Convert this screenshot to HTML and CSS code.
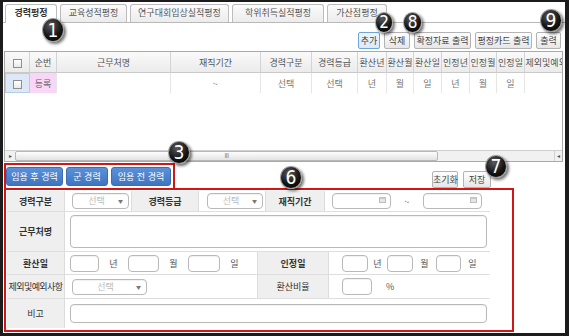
FILE: index.html
```html
<!DOCTYPE html>
<html lang="ko">
<head>
  <meta charset="UTF-8">
  <title>경력평정</title>
  <link rel="stylesheet" href="styles.css">
</head>
<body>
<div class="frame">
  <div class="tabs">
    <div class="tab active t1">경력평정</div>
    <div class="tab t2">교육성적평정</div>
    <div class="tab t3">연구대회입상실적평정</div>
    <div class="tab t4">학위취득실적평정</div>
    <div class="tab t5">가산점평정</div>
  </div>

  <div class="toolbar">
    <button class="btn focus w-add">추가</button>
    <button class="btn w-del">삭제</button>
    <button class="btn w-long">확정자료 출력</button>
    <button class="btn w-long">평정카드 출력</button>
    <button class="btn w-out">출력</button>
  </div>

  <div class="grid">
    <div class="grid-body">
      <table class="list">
        <colgroup>
          <col class="c25"><col class="c27"><col class="c114"><col class="c90">
          <col class="c51"><col class="c46"><col class="c29"><col class="c27">
          <col class="c28"><col class="c28"><col class="c27"><col class="c28"><col class="c60">
        </colgroup>
        <thead>
          <tr>
            <th><span class="chk"></span></th>
            <th>순번</th>
            <th>근무처명</th>
            <th>재직기간</th>
            <th>경력구분</th>
            <th>경력등급</th>
            <th>환산년</th>
            <th>환산월</th>
            <th>환산일</th>
            <th>인정년</th>
            <th>인정월</th>
            <th>인정일</th>
            <th>제외및예외사항</th>
          </tr>
        </thead>
        <tbody>
          <tr>
            <td class="sel"><span class="chk"></span></td>
            <td class="reg">등록</td>
            <td></td>
            <td>~</td>
            <td>선택</td>
            <td>선택</td>
            <td>년</td>
            <td>월</td>
            <td>일</td>
            <td>년</td>
            <td>월</td>
            <td>일</td>
            <td></td>
          </tr>
        </tbody>
      </table>
    </div>
    <div class="hscroll">
      <span class="sbtn">&#9656;</span>
      <div class="track"><div class="thumb">III</div></div>
      <span class="sbtn">&#9666;</span>
    </div>
  </div>

  <div class="actions">
    <div class="mark-box">
      <button class="bbtn w-after">임용 후 경력</button>
      <button class="bbtn w-army">군 경력</button>
      <button class="bbtn w-before">임용 전 경력</button>
    </div>
    <div class="right-btns">
      <button class="btn w-reset">초기화</button>
      <button class="btn w-save">저장</button>
    </div>
  </div>

  <div class="form">
    <div class="ftable">
      <div class="frow r1">
        <div class="lab b">경력구분</div>
        <div class="val p7"><span class="select s57">선택<i>&#9660;</i></span></div>
        <div class="lab b sep">경력등급</div>
        <div class="val p8"><span class="select s56">선택<i>&#9660;</i></span></div>
        <div class="lab b sep">재직기간</div>
        <div class="val p7">
          <span class="date"><svg width="7" height="7" viewBox="0 0 7 7"><rect x="0.5" y="1.5" width="6" height="5" fill="#e6e6e6" stroke="#bdbdbd"/><rect x="0.5" y="1.5" width="6" height="1.5" fill="#c9c9c9"/></svg></span>
          <span class="tilde">~</span>
          <span class="date"><svg width="7" height="7" viewBox="0 0 7 7"><rect x="0.5" y="1.5" width="6" height="5" fill="#e6e6e6" stroke="#bdbdbd"/><rect x="0.5" y="1.5" width="6" height="1.5" fill="#c9c9c9"/></svg></span>
        </div>
      </div>
      <div class="frow r2">
        <div class="lab b">근무처명</div>
        <div class="val p5"><span class="field area"></span></div>
      </div>
      <div class="frow r3">
        <div class="lab b">환산일</div>
        <div class="val p5">
          <span class="field n29"></span><span class="unit u29">년</span>
          <span class="field n31"></span><span class="unit u29">월</span>
          <span class="field n32"></span><span class="unit u29">일</span>
        </div>
        <div class="lab b sep">인정일</div>
        <div class="val p13">
          <span class="field n26"></span><span class="unit u19">년</span>
          <span class="field n26"></span><span class="unit u23">월</span>
          <span class="field n25"></span><span class="unit u23">일</span>
        </div>
      </div>
      <div class="frow r4">
        <div class="lab narrow">제외및예외사항</div>
        <div class="val p7"><span class="select s75">선택<i>&#9660;</i></span></div>
        <div class="lab sep">환산비율</div>
        <div class="val p13">
          <span class="field n30"></span><span class="pct">%</span>
        </div>
      </div>
      <div class="frow r5">
        <div class="lab">비고</div>
        <div class="val p5"><span class="field line"></span></div>
      </div>
    </div>
  </div>

  <span class="badge b1">1</span>
  <span class="badge b2">2</span>
  <span class="badge b8">8</span>
  <span class="badge b9">9</span>
  <span class="badge b3">3</span>
  <span class="badge b6">6</span>
  <span class="badge b7">7</span>
</div>
</body>
</html>
```

FILE: styles.css
```css
body { margin: 0; background: #fff; font-family: "Noto Sans CJK KR", "Noto Sans", sans-serif; font-size: 9px; color: #333; }
* { box-sizing: border-box; }

.frame {
  position: relative;
  width: 569px;
  height: 336px;
  border: 3px solid #1c1c1c;
  border-top-width: 2px;
  border-right-width: 4px;
  overflow: hidden;
  background: #fff;
}

/* tabs */
.tabs { display: flex; gap: 3px; height: 21px; padding: 2px 0 0 2px; border-bottom: 1px solid #b9b9b9; }
.tab {
  height: 18px;
  border: 1px solid #bcbcbc;
  border-bottom: none;
  border-radius: 3px 3px 0 0;
  background: linear-gradient(#fbfbfb, #ececec);
  color: #555;
  text-align: center;
  line-height: 16px;
  white-space: nowrap;
}
.tab.active { background: #fff; height: 19px; margin-bottom: -1px; color: #333; font-weight: bold; }
.t1 { width: 52px; }
.t2 { width: 67px; }
.t3 { width: 99px; }
.t4 { width: 92px; }
.t5 { width: 60px; }

/* buttons */
.btn {
  height: 17px;
  padding: 0;
  border: 1px solid #b3b3b3;
  border-radius: 2px;
  background: linear-gradient(#ffffff, #e6e6e6);
  color: #444;
  font: inherit;
  white-space: nowrap;
}
.btn.focus { border-color: #6ea5dc; background: linear-gradient(#eef6fd, #d9eafa); }
.toolbar { display: flex; justify-content: flex-end; gap: 4px; margin-top: 9px; padding-right: 4px; }
.w-add { width: 22px; }
.w-del { width: 26px; }
.w-long { width: 57px; }
.w-out { width: 25px; }

/* list grid */
.grid {
  display: flex;
  flex-direction: column;
  height: 111px;
  margin: 2px 2px 0 1px;
  border: 1px solid #a9a9a9;
}
.grid-body { flex: 1; overflow: hidden; }
.list { width: 580px; table-layout: fixed; border-collapse: separate; border-spacing: 0; }
.list th {
  height: 21px;
  padding: 0;
  background: linear-gradient(#fafafa, #ebebeb);
  border-right: 1px solid #d3d3d3;
  border-bottom: 1px solid #c9c9c9;
  font-weight: normal;
  color: #555;
  white-space: nowrap;
  overflow: hidden;
}
.list td {
  height: 20px;
  padding: 0;
  text-align: center;
  border-right: 1px solid #e6e6e6;
  color: #777;
  white-space: nowrap;
}
.list td.sel { background: #dce8f5; border: 1px solid #b3cde9; }
.list td.reg { background: #f9d6f7; color: #666; }
.c25 { width: 25px; }
.c27 { width: 27px; }
.c114 { width: 114px; }
.c90 { width: 90px; }
.c51 { width: 51px; }
.c46 { width: 46px; }
.c29 { width: 29px; }
.c28 { width: 28px; }
.c60 { width: 60px; }
.chk {
  display: inline-block;
  width: 9px;
  height: 9px;
  border: 1px solid #8f8f8f;
  background: linear-gradient(#ffffff, #e9e9e9);
  vertical-align: middle;
}

.hscroll { display: flex; height: 11px; border-top: 1px solid #d0d0d0; background: #f1f1f1; }
.sbtn { width: 10px; font-size: 6px; line-height: 10px; text-align: center; color: #555; }
.sbtn:last-child { width: 8px; border-left: 1px solid #d0d0d0; }
.track { flex: 1; }
.thumb {
  width: 423px;
  height: 10px;
  border: 1px solid #b8b8b8;
  border-radius: 2px;
  background: linear-gradient(#fdfdfd, #e3e3e3);
  font-size: 6px;
  line-height: 8px;
  text-align: center;
  color: #777;
  letter-spacing: -0.5px;
}

/* actions */
.actions { display: flex; width: 487px; height: 26px; margin: 1px 0 0 1px; }
.mark-box { display: flex; gap: 3px; width: 171px; height: 26px; padding-top: 2px; border: 2px solid #d01616; border-bottom: none; }
.bbtn {
  height: 19px;
  padding: 0;
  border: 1px solid #3c6db4;
  border-radius: 3px;
  background: linear-gradient(#5b91d8, #3f74c1);
  color: #fff;
  font: inherit;
  white-space: nowrap;
}
.w-after { width: 57px; }
.w-army { width: 42px; }
.w-before { width: 60px; }
.right-btns { display: flex; gap: 5px; margin-left: auto; align-self: flex-end; margin-bottom: 1px; }
.w-reset { width: 26px; }
.w-save { width: 28px; }

/* form */
.form { width: 510px; height: 144px; margin: -1px 0 0 1px; padding: 1px 0 0 1px; border: 2px solid #d01616; }
.ftable { width: 483px; }
.frow { display: grid; border-bottom: 1px solid #dedede; }
.r1 { grid-template-columns: 58px 66px 68px 66px 60px 1fr; height: 21px; }
.r2 { grid-template-columns: 58px 1fr; height: 40px; }
.r3 { grid-template-columns: 58px 192px 72px 1fr; height: 23px; }
.r4 { grid-template-columns: 58px 192px 72px 1fr; height: 24px; }
.r5 { grid-template-columns: 58px 1fr; height: 29px; border-bottom: none; }
.lab {
  display: flex;
  align-items: center;
  justify-content: center;
  background: #efefef;
  border-right: 1px solid #dcdcdc;
  color: #333;
  white-space: nowrap;
}
.lab.b { font-weight: bold; }
.lab.sep { border-left: 1px solid #dcdcdc; }
.lab.narrow { letter-spacing: -0.6px; overflow: visible; }
.val { display: flex; align-items: center; }
.p5 { padding-left: 5px; }
.p7 { padding-left: 7px; }
.p8 { padding-left: 8px; }
.p13 { padding-left: 13px; }

.select, .date, .field {
  display: inline-block;
  position: relative;
  height: 16px;
  border: 1px solid #b9b9b9;
  border-radius: 4px;
  background: #fff;
  box-shadow: inset 0 1px 1px rgba(0, 0, 0, 0.06);
}
.select { color: #bbb; text-align: center; line-height: 14px; padding-right: 8px; }
.select i { position: absolute; right: 5px; top: 0; font-style: normal; font-size: 5px; color: #777; }
.s57 { width: 57px; }
.s56 { width: 56px; }
.s75 { width: 75px; }
.date { width: 59px; }
.date svg { position: absolute; right: 4px; top: 2px; }
.tilde { width: 32px; text-align: center; color: #666; }
.field { height: 17px; }
.area { width: 417px; height: 33px; }
.line { width: 417px; height: 19px; }
.n25 { width: 25px; }
.n26 { width: 26px; }
.n29 { width: 29px; }
.n30 { width: 30px; }
.n31 { width: 31px; }
.n32 { width: 32px; }
.unit { text-align: center; color: #555; }
.u19 { width: 19px; }
.u23 { width: 23px; }
.u29 { width: 29px; }
.pct { margin-left: 14px; color: #555; }

/* callout numbers */
.badge {
  position: absolute;
  width: 22px;
  height: 23px;
  border: 1px solid #9a9a9a;
  border-radius: 50%;
  background: radial-gradient(circle at 40% 30%, #5a5a5a, #151515 55%, #000);
  box-shadow: 2px 2px 3px rgba(0, 0, 0, 0.55);
  color: #fff;
  font-family: "Liberation Sans Narrow", "DejaVu Sans Condensed", "Liberation Sans", sans-serif;
  font-size: 19px;
  line-height: 21px;
  text-align: center;
}
.b1 { left: 39px; top: 16px; width: 22px; height: 24px; line-height: 22px; }
.b2 { left: 372px; top: 10px; width: 18px; height: 21px; font-size: 17px; line-height: 19px; }
.b8 { left: 400px; top: 10px; width: 19px; height: 21px; font-size: 17px; line-height: 19px; }
.b9 { left: 537px; top: 7px; }
.b3 { left: 165px; top: 139px; }
.b6 { left: 277px; top: 164px; }
.b7 { left: 482px; top: 153px; }
```
